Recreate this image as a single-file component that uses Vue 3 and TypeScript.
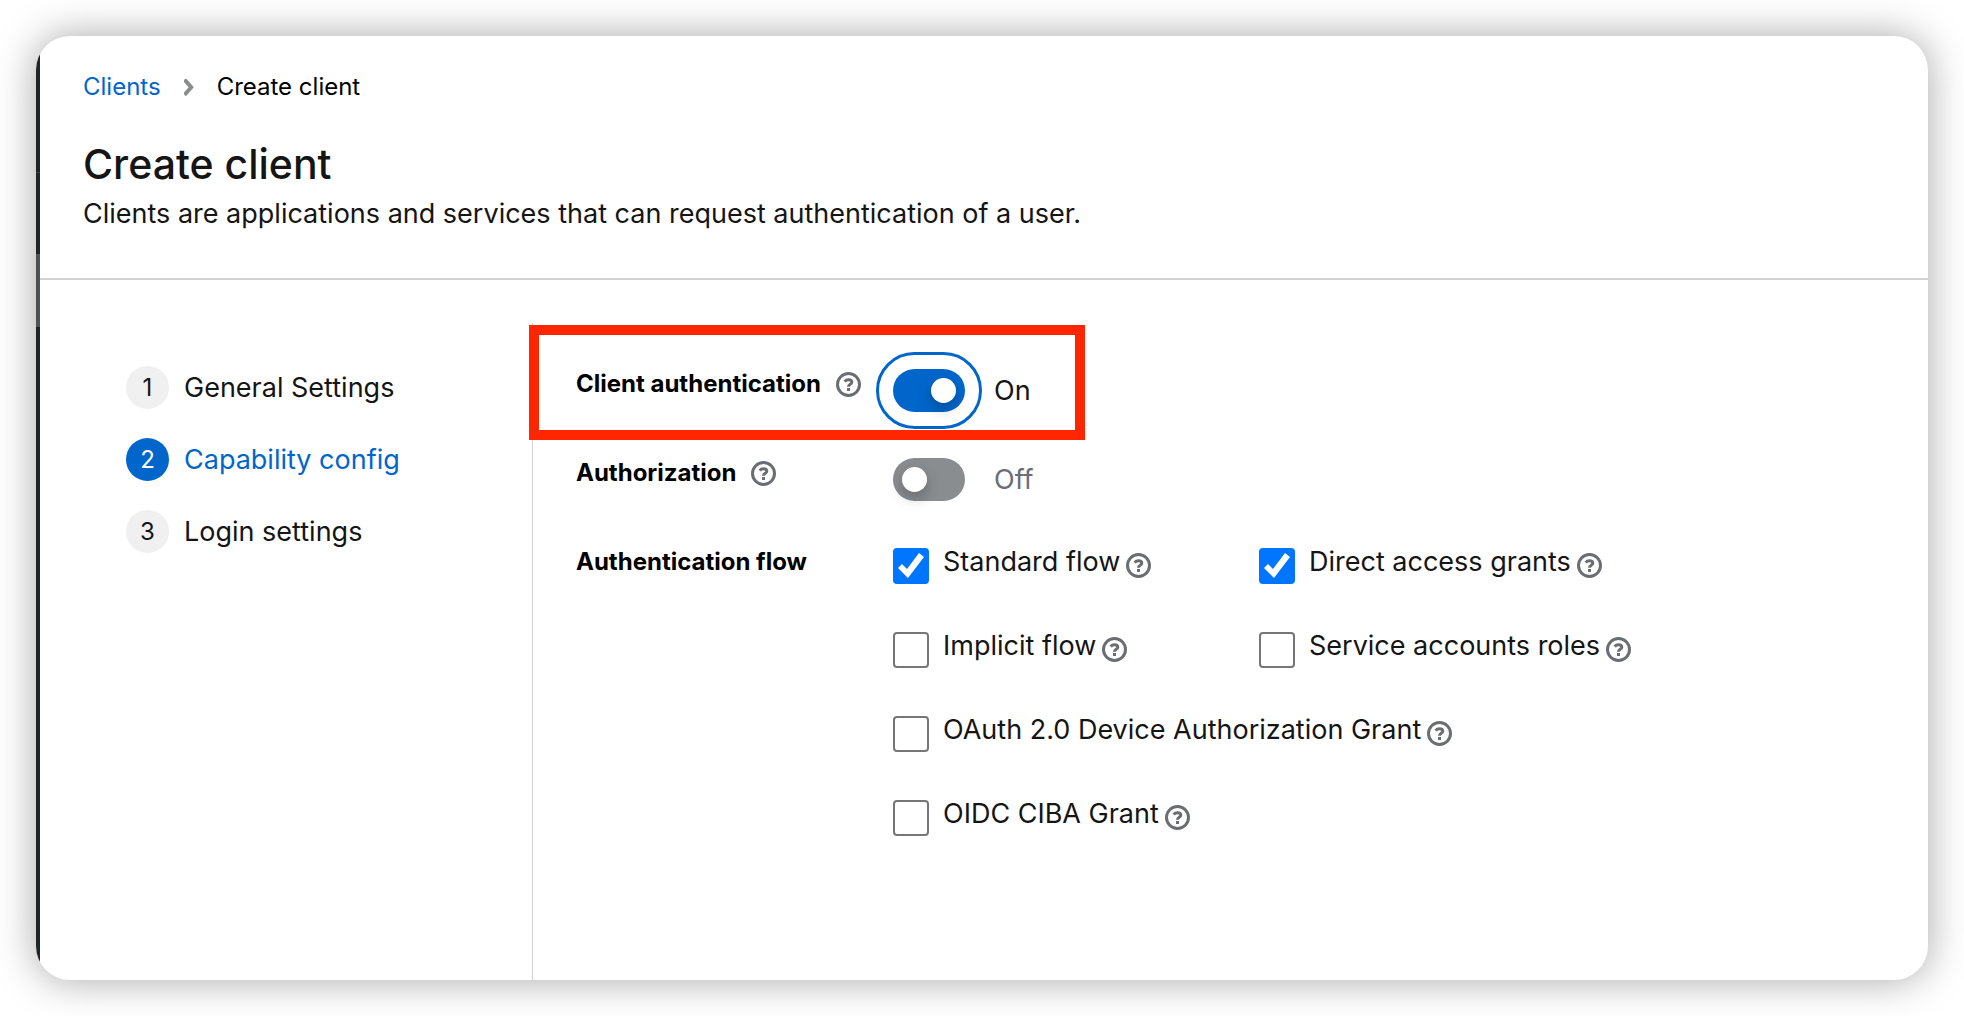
<script setup lang="ts">
import { reactive } from 'vue'

interface Step {
  label: string
  current: boolean
}

interface Option {
  id: string
  label: string
  checked: boolean
  wide: boolean
}

interface Toggle {
  id: string
  label: string
  on: boolean
  highlighted: boolean
}

const steps: Step[] = [
  { label: 'General Settings', current: false },
  { label: 'Capability config', current: true },
  { label: 'Login settings', current: false },
]

const toggles = reactive<Toggle[]>([
  { id: 'client-authentication', label: 'Client authentication', on: true, highlighted: true },
  { id: 'authorization', label: 'Authorization', on: false, highlighted: false },
])

const options = reactive<Option[]>([
  { id: 'standard-flow', label: 'Standard flow', checked: true, wide: false },
  { id: 'direct-access', label: 'Direct access grants', checked: true, wide: false },
  { id: 'implicit-flow', label: 'Implicit flow', checked: false, wide: false },
  { id: 'service-accounts', label: 'Service accounts roles', checked: false, wide: false },
  { id: 'device-grant', label: 'OAuth 2.0 Device Authorization Grant', checked: false, wide: true },
  { id: 'ciba-grant', label: 'OIDC CIBA Grant', checked: false, wide: true },
])
</script>

<template>
  <div class="page">
    <div class="window">
      <div class="rail" aria-hidden="true">
        <div class="rail-brand"></div>
        <div class="rail-realm"></div>
        <div class="rail-selected"></div>
      </div>
      <div class="content">
        <header class="header">
          <nav class="breadcrumb" aria-label="Breadcrumb">
            <a href="#clients">Clients</a>
            <svg class="chevron" viewBox="0 0 10 17" aria-hidden="true">
              <path d="M1.8 2 7.2 8.2 1.8 14.4" />
            </svg>
            <span>Create client</span>
          </nav>
          <h1>Create client</h1>
          <p class="subtitle">Clients are applications and services that can request authentication of a user.</p>
        </header>

        <div class="wizard">
          <nav class="steps" aria-label="Steps">
            <ol>
              <li v-for="(step, i) in steps" :key="step.label">
                <button type="button" class="step" :class="{ current: step.current }">
                  <span class="number">{{ i + 1 }}</span>
                  <span>{{ step.label }}</span>
                </button>
              </li>
            </ol>
          </nav>

          <form class="form" @submit.prevent>
            <div v-for="t in toggles" :key="t.id" class="row" :class="{ highlighted: t.highlighted }">
              <div class="field-label">
                <label :for="t.id">{{ t.label }}</label>
                <button type="button" class="help" :aria-label="'Help for ' + t.label">
                  <svg viewBox="0 0 25 25" aria-hidden="true">
                    <circle cx="12.5" cy="12.5" r="11" />
                    <path d="M8.7 9.6C9.5 8.5 10.7 7.8 12.5 7.8c2 0 3.3 1 3.3 2.4 0 2.3-3.3 2-3.3 4.6" />
                    <rect x="11" y="16" width="3" height="3" />
                  </svg>
                </button>
              </div>
              <div class="control">
                <input :id="t.id" v-model="t.on" class="switch" :class="{ ringed: t.highlighted }" type="checkbox" role="switch" />
                <span class="state" :class="{ off: !t.on }">{{ t.on ? 'On' : 'Off' }}</span>
              </div>
            </div>

            <div class="row" role="group" aria-labelledby="flow-label">
              <div id="flow-label" class="field-label">Authentication flow</div>
              <div class="options">
                <div v-for="o in options" :key="o.id" class="option" :class="{ wide: o.wide }">
                  <input :id="o.id" v-model="o.checked" class="box" type="checkbox" />
                  <label :for="o.id">{{ o.label }}</label>
                  <button type="button" class="help" :aria-label="'Help for ' + o.label">
                    <svg viewBox="0 0 25 25" aria-hidden="true">
                      <circle cx="12.5" cy="12.5" r="11" />
                      <path d="M8.7 9.6C9.5 8.5 10.7 7.8 12.5 7.8c2 0 3.3 1 3.3 2.4 0 2.3-3.3 2-3.3 4.6" />
                      <rect x="11" y="16" width="3" height="3" />
                    </svg>
                  </button>
                </div>
              </div>
            </div>
          </form>
        </div>
      </div>
    </div>
  </div>
</template>

<style>
body {
  background: #fff;
}
</style>

<style scoped>
.page {
  box-sizing: border-box;
  display: flex;
  min-height: 100vh;
  padding: 36px;
  font-family: Inter, sans-serif;
  font-size: 27px;
  line-height: 36px;
  color: #151515;
}

.window {
  flex: 1;
  display: flex;
  overflow: hidden;
  background: #fff;
  border-radius: 34px;
  box-shadow: 0 0 40px rgba(0, 0, 0, 0.35);
}

.rail {
  width: 4px;
  background: #212427;
}

.rail-brand {
  height: 136px;
  border-bottom: 1px solid #3c3f42;
}

.rail-realm {
  height: 81px;
}

.rail-selected {
  height: 73px;
  background: #4f5255;
}

.content {
  flex: 1;
  display: flex;
  flex-direction: column;
}

.header {
  padding: 33px 43px 46px;
  border-bottom: 2px solid #d2d2d2;
}

.breadcrumb {
  display: flex;
  align-items: center;
  font-size: 24px;
  color: #000;
}

.breadcrumb a {
  color: #06c;
  text-decoration: none;
}

.chevron {
  width: 10px;
  height: 17px;
  margin: 0 23px;
  fill: none;
  stroke: #8a8d90;
  stroke-width: 4;
  stroke-linecap: square;
}

h1 {
  margin: 31px 0 0;
  font-size: 41px;
  line-height: 56px;
  font-weight: 500;
}

.subtitle {
  margin: 4px 0 0;
}

.wizard {
  flex: 1;
  display: flex;
  margin-top: 43px;
}

.steps {
  box-sizing: border-box;
  width: 493px;
  padding: 43px 0 0 86px;
  border-right: 1px solid #d2d2d2;
}

ol {
  display: grid;
  gap: 29px;
  margin: 0;
  padding: 0;
  list-style: none;
}

button {
  padding: 0;
  border: 0;
  background: none;
  font: inherit;
  color: inherit;
}

li {
  display: flex;
}

.step {
  display: flex;
  align-items: center;
  gap: 15px;
}

.number {
  width: 43px;
  border-radius: 50%;
  background: #f0f0f0;
  font-size: 24px;
  line-height: 43px;
  text-align: center;
}

.current {
  color: #06c;
}

.current .number {
  background: #06c;
  color: #fff;
}

.form {
  flex: 1;
  display: flex;
  flex-direction: column;
  gap: 43px;
  padding: 43px;
}

.row {
  position: relative;
  display: flex;
  align-items: flex-start;
}

.highlighted::after {
  content: '';
  position: absolute;
  top: -41px;
  left: -47px;
  box-sizing: border-box;
  width: 556px;
  height: 115px;
  border: 10px solid #ff2600;
  pointer-events: none;
}

.field-label {
  display: flex;
  align-items: center;
  gap: 15px;
  width: 317px;
  font-size: 24px;
  font-weight: 700;
  color: #000;
}

.control {
  display: flex;
  align-items: center;
  gap: 29px;
  padding-top: 3px;
}

input {
  appearance: none;
  flex: none;
  margin: 0;
}

.switch {
  box-sizing: border-box;
  width: 72px;
  height: 43px;
  padding: 9px;
  border-radius: 22px;
  background: #8a8d90;
}

.switch::before {
  content: '';
  display: block;
  width: 25px;
  height: 25px;
  border-radius: 50%;
  background: #fff;
  box-shadow: 0 6px 14px rgba(0, 0, 0, 0.25);
}

.switch:checked {
  background: #06c;
}

.switch:checked::before {
  margin-left: 29px;
}

.ringed {
  outline: 3px solid #06c;
  outline-offset: 14px;
}

.state.off {
  color: #6a6e73;
}

.options {
  flex: 1;
  display: grid;
  grid-template-columns: 366px 1fr;
  row-gap: 44px;
}

.option {
  display: flex;
  align-items: flex-start;
}

.wide {
  grid-column: 1 / -1;
}

.option label {
  margin: 0 6px 0 14px;
}

.box {
  width: 36px;
  height: 36px;
  margin-top: 4px;
  box-sizing: border-box;
  border: 2px solid #767676;
  border-radius: 4px;
  background: #fff;
}

.box:checked {
  border: 0;
  background: #0075ff;
}

.box:checked::before {
  content: '';
  display: block;
  height: 36px;
  background: #fff;
  clip-path: polygon(5px 20px, 9px 16px, 14px 21px, 26px 5px, 31px 9px, 15px 30px);
}

.help {
  display: flex;
  flex: none;
}

.option .help {
  margin-top: 9px;
}

.help svg {
  width: 25px;
  height: 25px;
  fill: none;
  stroke: #6a6e73;
  stroke-width: 3;
}

.help rect {
  fill: #6a6e73;
  stroke: none;
}
</style>
